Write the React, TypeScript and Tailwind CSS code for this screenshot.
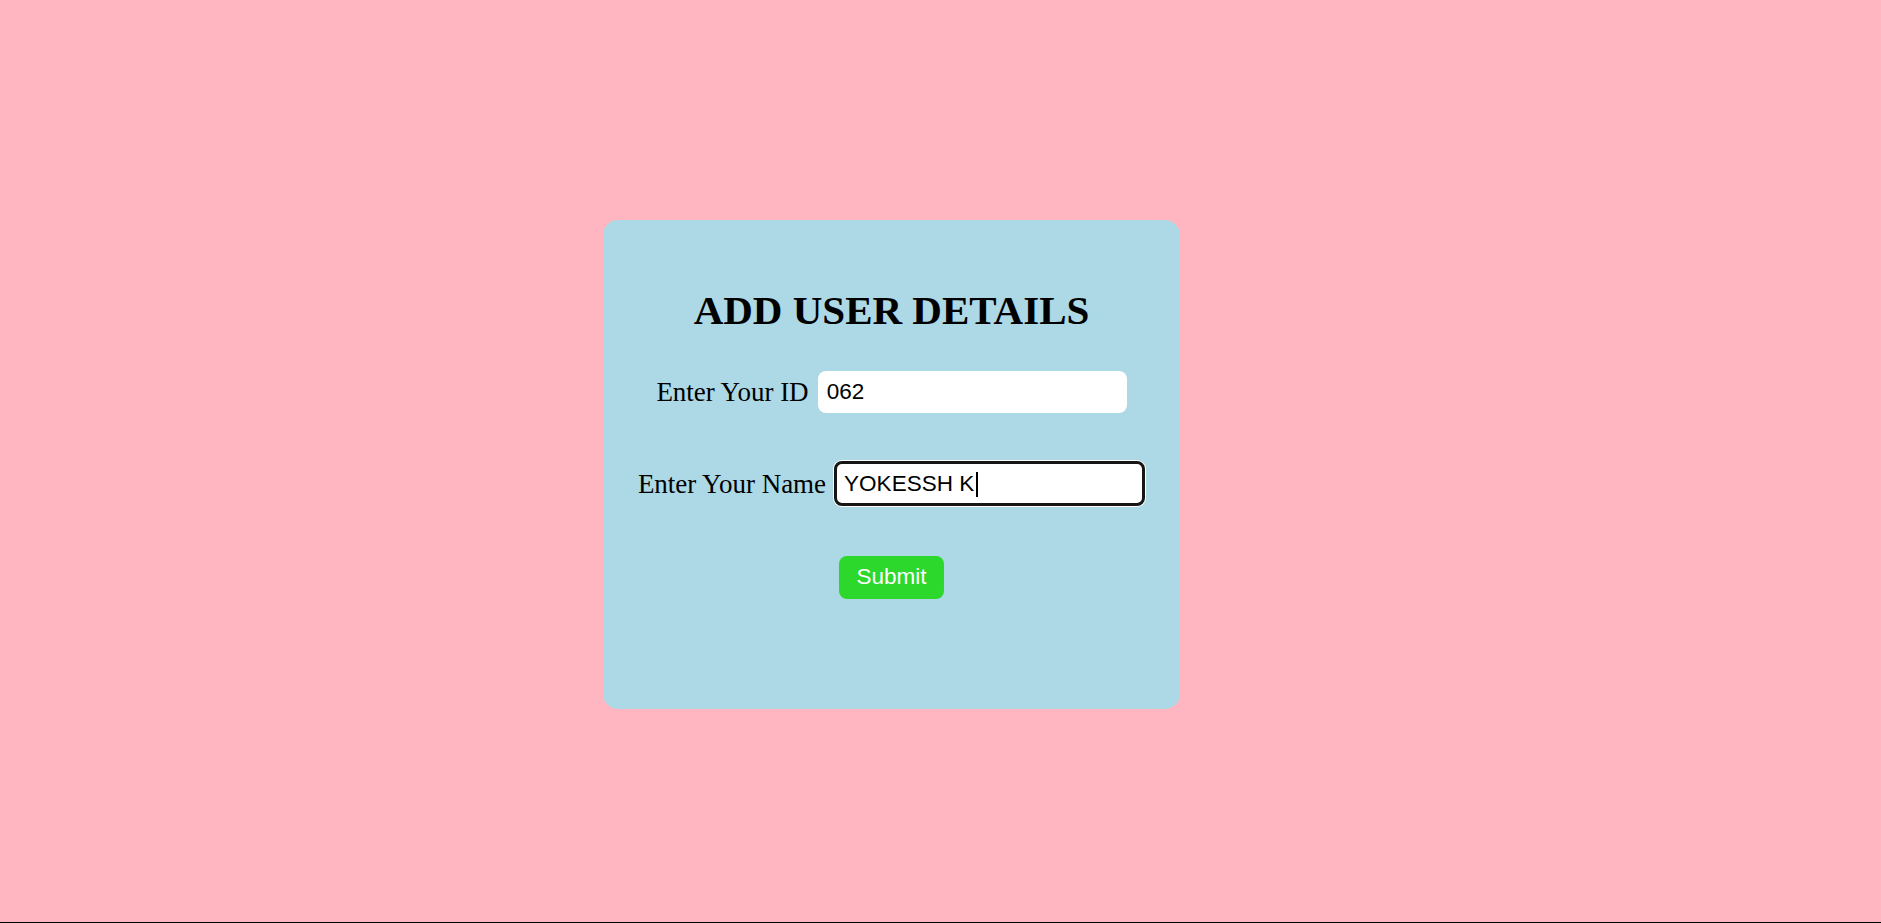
import { useState } from 'react';

export default function App() {
  const [id, setId] = useState('062');
  const [name, setName] = useState('YOKESSH K');

  return (
    <div className="h-[923px] bg-[#ffb6c1] border-b border-black">
      <div className="flex pl-[603px] pt-[220px]">
        {/* Card */}
        <form
          onSubmit={(e) => e.preventDefault()}
          className="w-[577px] h-[489px] rounded-[15px] bg-[#add8e6] flex flex-col items-center pt-[67px]"
        >
          <h1 className="font-['Liberation_Serif',serif] text-[41px] leading-[47px] font-bold text-black">
            ADD USER DETAILS
          </h1>

          {/* ID row */}
          <div className="mt-[37px] flex items-center gap-[9px]">
            <label className="font-['Liberation_Serif',serif] text-[27px] leading-[30px] text-black">
              Enter Your ID
            </label>
            <input
              value={id}
              onChange={(e) => setId(e.target.value)}
              className="w-[309px] h-[42px] rounded-[8px] bg-white pl-[9px] font-['Liberation_Sans',Arial,sans-serif] text-[22.5px] text-black outline-none"
            />
          </div>

          {/* Name row (focused) */}
          <div className="mt-[48px] flex items-center gap-[8px]">
            <label className="font-['Liberation_Serif',serif] text-[27px] leading-[30px] text-black">
              Enter Your Name
            </label>
            <div className="relative w-[311px] h-[45px] rounded-[8px] bg-white border-[3px] border-[#161616] ring-1 ring-white flex items-center pl-[7px]">
              <input
                value={name}
                onChange={(e) => setName(e.target.value)}
                className="w-full bg-transparent font-['Liberation_Sans',Arial,sans-serif] text-[22.5px] text-black outline-none caret-transparent"
              />
              {/* caret */}
              <span className="absolute left-[139px] top-[8px] w-[2px] h-[25px] bg-black" />
            </div>
          </div>

          <button
            type="submit"
            className="mt-[50px] w-[105px] h-[43px] rounded-[8px] bg-[#2bd82b] text-white font-['Liberation_Sans',Arial,sans-serif] text-[22.5px] leading-none"
          >
            Submit
          </button>
        </form>
      </div>
    </div>
  );
}
